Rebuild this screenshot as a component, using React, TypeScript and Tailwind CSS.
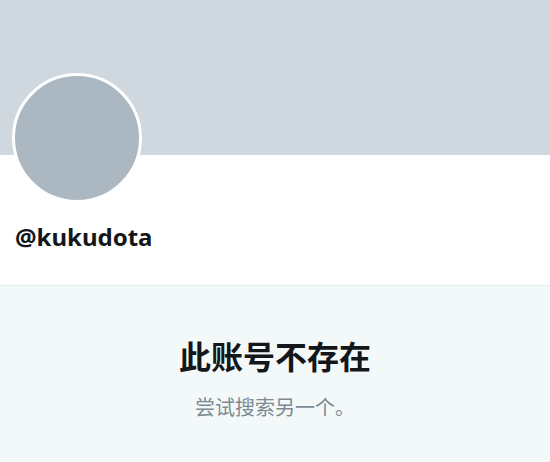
import React from "react";

export default function App() {
  return (
    <div
      className="w-[550px] h-[462px] overflow-hidden bg-[#f3f9f9] flex flex-col"
      style={{ fontFamily: '"Noto Sans", "Noto Sans CJK SC", sans-serif' }}
    >
      <div className="h-[155px] shrink-0 bg-[#ced8de]" />
      <div className="bg-white h-[130px] shrink-0 px-[12px] flex flex-col">
        <div className="-mt-[82px] w-[130px] h-[130px] rounded-full bg-[#abb8c1] border-[3px] border-white" />
        <div className="mt-[19px] pl-[3px] text-[24px] leading-[30px] font-bold text-[#14171a]">
          @kukudota
        </div>
      </div>
      <div className="h-px bg-[#e6ecef]" />
      <div className="flex flex-col items-center pt-[51px]">
        <div className="text-[32px] leading-[40px] font-bold text-[#14171a]">此账号不存在</div>
        <div className="mt-[18px] text-[20px] leading-[26px] text-[#7d8a93]">尝试搜索另一个。</div>
      </div>
    </div>
  );
}
